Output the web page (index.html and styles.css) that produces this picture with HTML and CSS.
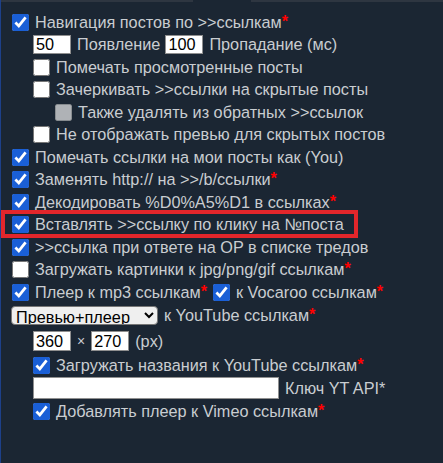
FILE: index.html
```html
<!DOCTYPE html>
<html lang="ru">
<head>
    <meta charset="utf-8">
    <meta name="viewport" content="width=device-width, initial-scale=1.0">
    <title>Настройки ссылок</title>
    <link rel="stylesheet" href="styles.css">
</head>
<body>
    <div class="tabs"><span class="tab-line"></span><span class="tab-gap"></span><span class="tab-line grow"></span></div>
    <main class="opts">
        <label class="row"><input type="checkbox" checked>Навигация постов по &gt;&gt;ссылкам<i>*</i></label>
        <div class="row lv1"><input type="text" class="num" value="50">Появление<input type="text" class="num after" value="100">Пропадание (мс)</div>
        <label class="row lv1"><input type="checkbox">Помечать просмотренные посты</label>
        <label class="row lv1"><input type="checkbox">Зачеркивать &gt;&gt;ссылки на скрытые посты</label>
        <label class="row lv2"><input type="checkbox" disabled>Также удалять из обратных &gt;&gt;ссылок</label>
        <label class="row lv1"><input type="checkbox">Не отображать превью для скрытых постов</label>
        <label class="row"><input type="checkbox" checked>Помечать ссылки на мои посты как (You)</label>
        <label class="row"><input type="checkbox" checked>Заменять http:// на &gt;&gt;/b/ссылки<i>*</i></label>
        <label class="row"><input type="checkbox" checked>Декодировать %D0%A5%D1 в ссылках<i>*</i></label>
        <label class="row hl"><input type="checkbox" checked>Вставлять &gt;&gt;ссылку по клику на №поста</label>
        <label class="row"><input type="checkbox" checked>&gt;&gt;ссылка при ответе на OP в списке тредов</label>
        <label class="row"><input type="checkbox">Загружать картинки к jpg/png/gif ссылкам<i>*</i></label>
        <div class="row"><label><input type="checkbox" checked>Плеер к mp3 ссылкам<i>*</i></label><label class="next"><input type="checkbox" checked>к Vocaroo ссылкам<i>*</i></label></div>
        <div class="row tall"><select class="pick"><option>Превью+плеер</option><option>Превью</option><option>Плеер</option></select>к YouTube ссылкам<i>*</i></div>
        <div class="row lv1 taller"><input type="text" class="num" value="360"><span class="x">×</span><input type="text" class="num" value="270">(px)</div>
        <label class="row lv1"><input type="checkbox" checked>Загружать названия к YouTube ссылкам<i>*</i></label>
        <div class="row lv1 key"><input type="text" class="api">Ключ YT API*</div>
        <label class="row lv1"><input type="checkbox" checked>Добавлять плеер к Vimeo ссылкам<i>*</i></label>
    </main>
</body>
</html>
```

FILE: styles.css
```css
html {
    background: #1b2633;
}
body {
    margin: 0;
    min-height: 463px;
    border-left: 1px solid #1d4089;
    box-sizing: border-box;
    color: #c9cdd1;
    font-family: "Liberation Sans", Arial, sans-serif;
    font-size: 16.25px;
}

.tabs {
    display: flex;
    height: 2px;
}
.tab-line {
    width: 211px;
    background: #2e3641;
}
.tab-line.grow {
    flex-grow: 1;
}
.tab-gap {
    width: 64px;
}

.opts {
    display: flex;
    flex-direction: column;
    padding: 8.75px 0 0 11px;
}
.row {
    display: flex;
    align-items: center;
    height: 22.5px;
    white-space: nowrap;
    width: max-content;
}
.row label {
    display: flex;
    align-items: center;
}
.row .next {
    margin-left: 6px;
}
.lv1 {
    margin-left: 21px;
}
.lv2 {
    margin-left: 43px;
}
.tall {
    height: 25px;
}
.taller {
    height: 26px;
}
.key {
    height: 23px;
}

i {
    font-style: normal;
    font-weight: bold;
    color: #f00;
    position: relative;
    top: -1px;
}

input[type=checkbox] {
    width: 17px;
    height: 17px;
    margin: 0 6px 0 0;
    accent-color: #1a5fd6;
}

input[type=text] {
    font-family: inherit;
    font-size: 16.25px;
    color: #000;
    background: #fff;
    border: 1px solid #8f8f8f;
    padding: 0 2px;
    height: 19px;
    box-sizing: border-box;
    margin: 0 6px 0 0;
    outline: none;
}
.num {
    width: 38px;
}
.num.after {
    margin-left: 5px;
}
.taller .num {
    height: 20px;
}
.x {
    margin-right: 6px;
    font-size: 14px;
}
.api {
    width: 246px;
    height: 22px !important;
}

.pick {
    font-family: inherit;
    font-size: 16.25px;
    color: #000;
    background: #efefef;
    border: 1px solid #767676;
    border-radius: 4px;
    width: 147px;
    height: 19px;
    padding: 0;
    margin: 0 6px 0 -1px;
}

/* red frame around the highlighted option */
.hl {
    position: relative;
}
.hl::after {
    content: "";
    position: absolute;
    left: -11px;
    right: -14px;
    top: -3.5px;
    bottom: -2px;
    border: 4px solid #e3262b;
}
```
